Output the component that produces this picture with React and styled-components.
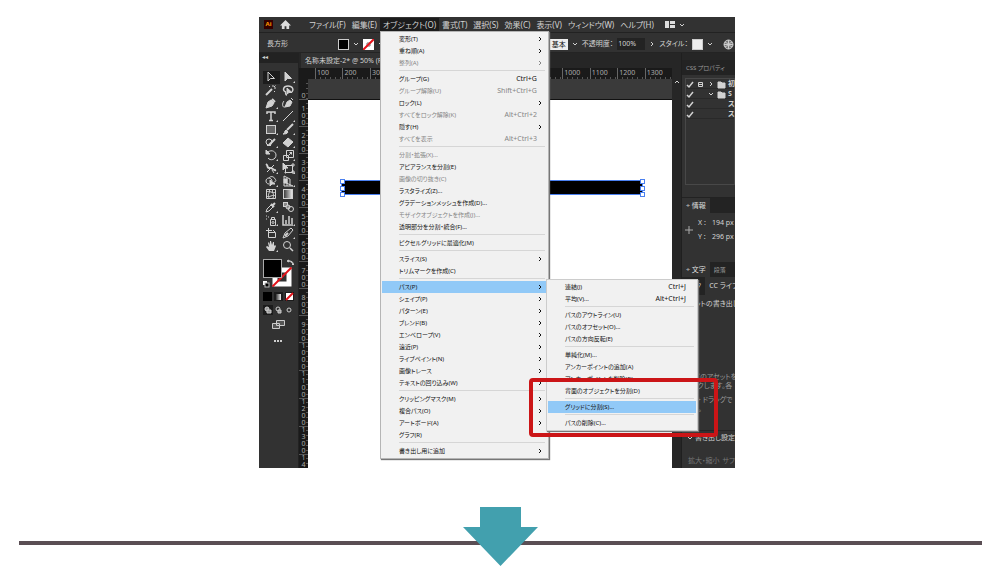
import React from 'react'
import styled, { createGlobalStyle } from 'styled-components'

const menuTabs = ['ファイル(F)', '編集(E)', 'オブジェクト(O)', '書式(T)', '選択(S)', '効果(C)', '表示(V)', 'ウィンドウ(W)', 'ヘルプ(H)']

const pathItems = [
    [{ text: '連結(J)', keys: 'Ctrl+J' }, { text: '平均(V)...', keys: 'Alt+Ctrl+J' }],
    [{ text: 'パスのアウトライン(U)' }, { text: 'パスのオフセット(O)...' }, { text: 'パスの方向反転(E)' }],
    [{ text: '単純化(M)...' }, { text: 'アンカーポイントの追加(A)' }, { text: 'アンカーポイントを削除(R)' }, { text: '背面のオブジェクトを分割(D)' }],
    [{ text: 'グリッドに分割(S)...', active: true }],
    [{ text: 'パスの削除(C)...' }],
]

const objectItems = [
    [{ text: '変形(T)', more: true }, { text: '重ね順(A)', more: true }, { text: '整列(A)', more: true, off: true }],
    [
        { text: 'グループ(G)', keys: 'Ctrl+G' },
        { text: 'グループ解除(U)', keys: 'Shift+Ctrl+G', off: true },
        { text: 'ロック(L)', more: true },
        { text: 'すべてをロック解除(K)', keys: 'Alt+Ctrl+2', off: true },
        { text: '隠す(H)', more: true },
        { text: 'すべてを表示', keys: 'Alt+Ctrl+3', off: true },
    ],
    [
        { text: '分割・拡張(X)...', off: true },
        { text: 'アピアランスを分割(E)' },
        { text: '画像の切り抜き(C)', off: true },
        { text: 'ラスタライズ(Z)...' },
        { text: 'グラデーションメッシュを作成(D)...' },
        { text: 'モザイクオブジェクトを作成(J)...', off: true },
        { text: '透明部分を分割・統合(F)...' },
    ],
    [{ text: 'ピクセルグリッドに最適化(M)' }],
    [{ text: 'スライス(S)', more: true }, { text: 'トリムマークを作成(C)' }],
    [
        { text: 'パス(P)', more: true, active: true, sub: pathItems },
        { text: 'シェイプ(P)', more: true },
        { text: 'パターン(E)', more: true },
        { text: 'ブレンド(B)', more: true },
        { text: 'エンベロープ(V)', more: true },
        { text: '遠近(P)', more: true },
        { text: 'ライブペイント(N)', more: true },
        { text: '画像トレース', more: true },
        { text: 'テキストの回り込み(W)', more: true },
    ],
    [
        { text: 'クリッピングマスク(M)', more: true },
        { text: '複合パス(O)', more: true },
        { text: 'アートボード(A)', more: true },
        { text: 'グラフ(R)' },
    ],
    [{ text: '書き出し用に追加', more: true }],
]

// every tool is drawn on a 12 x 12 grid
const tools = [
    ['選択', <path d="M3 1v9l2.500-2.500H9.500z" />],
    ['ダイレクト選択', <path d="M3 1v9l2.500-2.500H9.500z" fill="currentColor" />],
    ['自動選択', <><path d="M1 11 7 5" strokeWidth="2" /><path d="M8 1v2M11 4H9M4 2l1 1M10 8 9 7M10.500 1.500 9 3" /></>],
    ['なげなわ', <><path d="M4 8C0 7 1 2 6 2s6 4 4 6M4 8c-1 1 0 3 1 3" strokeWidth="1.500" /><path d="M5 4v6l2-1.500h3z" fill="currentColor" /></>],
    ['ペン', <><path d="M1 11 3 5l3-2 3 3-2 3z" fill="currentColor" /><path d="m7 2 3 3" strokeWidth="2" /></>],
    ['曲線', <><path d="m3 10 2-5 3-2 2 2-2 4z" fill="currentColor" /><path d="M3 10C0 11 0 6 2 4M9 1l2 2" /></>],
    ['文字', <path d="M2 4V2h8v2M6 2v9M4 10.500h4" strokeWidth="1.500" />],
    ['直線', <path d="M1 11 11 1" />],
    ['長方形', <rect x="1.500" y="2.500" width="9" height="8" fill="#666" />],
    ['ブラシ', <><path d="m5 7 6-6" strokeWidth="2" /><path d="M1 11c2 0 1-3 3-4l2 2c-1 2-3 2-5 2z" fill="currentColor" /></>],
    ['Shaper', <><circle cx="4" cy="6" r="3" /><path d="m4 9 6-6" strokeWidth="2" /><path d="M2 9.500h4" /></>],
    ['消しゴム', <path d="m1 7 5-5 5 4-5 5z" fill="currentColor" />],
    ['回転', <><path d="M3 3c4-3 8 0 8 3 0 5-6 6-8 3" /><path d="M1 1v4h4z" fill="currentColor" /></>],
    ['拡大・縮小', <path d="M4.500 1.500h7v7h-7zM1.500 6.500h5v5h-5zM7 6l3-3M7.500 3.500h2v2" />],
    ['線幅', <><path d="M1 2c3 2 0 4 4 4s3 3 6 2" strokeWidth="2" /><path d="M2 10 9 3M7 8l2 3" /></>],
    ['自由変形', <><path d="M3.500 3.500h7v7h-7zM10 2h2v2h-2zM10 9h2v2h-2zM3 10h1v1h-1z" /><path d="M1 1v7l2-2h3z" fill="currentColor" /></>],
    ['シェイプ形成', <><path d="M4 9C0 9 0 3 4 3c1-2 5-2 6 1 2 2 0 3-1 3M4 3c2 0 3 2 3 3" /><path d="M5 5v6l2-2h3z" fill="currentColor" /></>],
    ['遠近グリッド', <><path d="M2 1v10h9L2 7M5 3v8M2 1l6 3v7" /><path d="M2 4h3v4H2z" fill="currentColor" /></>],
    ['メッシュ', <path d="M1.500 1.500h9v9h-9zM4 1c2 3-2 5 0 9M8 1c-2 3 2 5 0 9M1 4c4-2 6 2 10 0M1 8c4 2 6-2 10 0" />],
    ['グラデーション', <><defs><linearGradient id="toolFade"><stop stopColor="#333" /><stop offset="1" stopColor="#eee" /></linearGradient></defs><rect x="1.500" y="1.500" width="9" height="9" fill="url(#toolFade)" /></>],
    ['スポイト', <><path d="m1 11 1-3 4-4 2 2-4 4z" /><path d="m6 3 3 3M8 4l2-2" strokeWidth="2" /></>],
    ['ブレンド', <><rect x="1.500" y="1.500" width="4" height="4" fill="#888" /><circle cx="6" cy="6" r="2" fill="#888" /><circle cx="9" cy="8" r="2.500" /></>],
    ['シンボル', <><path d="M5.500 5.500h5v6h-5zM6.500 3.500h3v2h-3z" /><path d="M1 2h1M1 5h1M3 3h1" /><circle cx="8" cy="8.500" r="1" /></>],
    ['グラフ', <path d="M1 1v10h10M4 10V6M7 10V2M10 10V4" strokeWidth="1.500" />],
    ['アートボード', <path d="M3.500 1v9M1 3.500h6M3.500 5.500h7v5h-7zM8 3l2 2" />],
    ['スライス', <><path d="m1 11 2-5 6-5 2 2-5 6z" /><path d="m3 9 3-3" strokeWidth="2" /></>],
    ['手のひら', <><path d="M4 11 1 7l1-1 2 1-1-4 1-1 1 3V1h1l1 4 1-3h1v4l1-1 1 1-2 5z" fill="currentColor" stroke="none" /></>],
    ['ズーム', <><circle cx="5" cy="5" r="3.500" /><path d="m8 8 3 3" strokeWidth="1.500" /></>],
]
const noCorner = ['選択', '自動選択', '曲線', 'メッシュ', 'グラデーション', 'ブレンド', 'アートボード', 'ズーム', 'なげなわ']

// the marks behind the open menu carry no number
const topMarks = ['100', '200', '300', '', '', '', '', '', '', '1000', '1100', '1200', '1300']
const sideMarks = ['100', '200', '300', '400', '500', '600', '700', '800', '900', '1000', '1100', '1200', '1300', '14']

const Chevron = ({ turn = 'right' }) => (
    <ChevronIcon viewBox="0 0 6 6" $turn={turn}><path d="m2 1 2 2-2 2" /></ChevronIcon>
)

const MenuList = ({ groups }) => groups.map((group, i) => (
    <MenuGroup key={i} role="group">
        {group.map(item => (
            <MenuRow key={item.text}>
                <MenuButton type="button" disabled={item.off} $active={item.active}>
                    <span>{item.text}</span>
                    {item.keys && <Keys>{item.keys}</Keys>}
                    {item.more && <Chevron />}
                </MenuButton>
                {item.sub && <SubMenu><MenuList groups={item.sub} /></SubMenu>}
            </MenuRow>
        ))}
    </MenuGroup>
))

const Toolbox = () => (
    <ToolPanel>
        <PanelGrip>◂◂</PanelGrip>
        <ToolGrid>
            {tools.map(([name, shape], i) => (
                <ToolButton key={name} type="button" aria-label={name} $active={i === 0}>
                    <ToolIcon viewBox="0 0 13 13">
                        {shape}
                        {!noCorner.includes(name) && <path d="M13 10v2h-2z" fill="currentColor" stroke="none" />}
                    </ToolIcon>
                </ToolButton>
            ))}
        </ToolGrid>
        <Swatches viewBox="0 0 34 88">
            <rect x="13" y="12" width="14" height="14" fill="none" stroke="#fff" strokeWidth="5" />
            <path d="M10.500 28.500 29.500 9.500" stroke="#e3131b" strokeWidth="2" />
            <rect x="1.500" y="1.500" width="18" height="18" fill="#000" stroke="#aaa" />
            <path d="M27 3c3 0 4 1 4 3M25 3l2-1v2zM30 6h2l-1 1z" stroke="#ccc" fill="#ccc" />
            <rect x="1" y="23" width="4" height="4" fill="#fff" />
            <rect x="3" y="25" width="4" height="4" fill="#000" stroke="#bbb" />
            <rect x="1" y="34" width="9" height="9" fill="#000" />
            <rect x="12" y="34" width="9" height="9" fill="#1c1c1c" />
            <rect x="14" y="36" width="5" height="6" fill="url(#toolFade)" />
            <rect x="23" y="34" width="9" height="9" fill="#1c1c1c" />
            <rect x="24" y="35" width="7" height="7" fill="#fff" />
            <path d="m24 42 7-7" stroke="#e3131b" strokeWidth="2" />
            <rect x="1" y="47" width="10" height="10" fill="#1b1b1b" />
            <g fill="#999" stroke="#ccc">
                <circle cx="5" cy="51" r="2" /><path d="M5 52h4v3H5z" />
                <circle cx="16" cy="51" r="2" fill="none" /><path d="M16 52h3v3h-3z" />
                <circle cx="27" cy="52" r="2" fill="none" />
            </g>
            <path d="M14.500 62.500h8v5h-8zM10.500 65.500h7v5h-7z" fill="#555" stroke="#ccc" />
            <path d="M12 83h2M15 83h2M18 83h2" stroke="#ccc" strokeWidth="2" />
        </Swatches>
    </ToolPanel>
)

const Artwork = () => (
    <Canvas>
        <Artboard>
            <Shape>
                <Handle $x="0" $y="0" /><Handle $x="100%" $y="0" />
                <Handle $x="0" $y="50%" /><Handle $x="100%" $y="50%" />
                <Handle $x="0" $y="100%" /><Handle $x="100%" $y="100%" />
            </Shape>
        </Artboard>
    </Canvas>
)

const Check = () => <Glyph viewBox="0 0 9 9"><path d="m1 5 2 2 4-5" strokeWidth="1.500" /></Glyph>
const Folder = () => <Glyph viewBox="0 0 9 9"><path d="M1 2h3l1 1h3v5H1z" fill="currentColor" /></Glyph>

const SidePanels = () => (
    <Side>
        <PanelTabs><PanelTab type="button" $quiet>CSS プロパティ</PanelTab></PanelTabs>
        <LayerPanel>
            <LayerList>
                <Layer><Check /><Glyph viewBox="0 0 9 9"><path d="M2.500 2.500h4v4h-4zM3 4.500h3" /></Glyph><Chevron /><Folder /><b>初</b></Layer>
                <Layer><Check /><i /><Chevron turn="down" /><Folder /><b>S</b></Layer>
                <Layer><Check /><i /><i /><i /><b>ス</b></Layer>
                <Layer><Check /><i /><i /><i /><b>ス</b></Layer>
            </LayerList>
        </LayerPanel>
        <PanelTabs><PanelTab type="button" $on>÷ 情報</PanelTab></PanelTabs>
        <InfoPanel>
            <Plus viewBox="0 0 8 8"><path d="M4 0v8M0 4h8" /></Plus>
            <Coords>
                <dt>X :</dt><dd>194 px</dd>
                <dt>Y :</dt><dd>296 px</dd>
            </Coords>
        </InfoPanel>
        <PanelTabs><PanelTab type="button" $on>÷ 文字</PanelTab><PanelTab type="button" $quiet>段落</PanelTab></PanelTabs>
        <PanelTabs $tall><PanelTab type="button" $inset>ク</PanelTab><PanelTab type="button" $on>CC ライブ</PanelTab></PanelTabs>
        <ExportPanel>
            <ExportTitle>アセットの書き出し</ExportTitle>
            <Hint>任意のアセットを<br />ラックします。各</Hint>
            <Hint>Alt + ドラッグで<br />ます。</Hint>
            <ExportSettings><Chevron turn="down" />書き出し設定</ExportSettings>
            <ExportScale><span>拡大・縮小</span><span>サフ</span></ExportScale>
        </ExportPanel>
    </Side>
)

const App = () => (
    <Page>
        <GlobalStyle />
        <Figure>
            <Window>
                <MenuBar>
                    <Logo>Ai</Logo>
                    <Home viewBox="0 0 12 12"><path d="M6 1 0 7h2v4h3V8h2v3h3V7h2z" /></Home>
                    {menuTabs.map(text => (
                        <TabHolder key={text}>
                            <MenuTab type="button" $open={text.startsWith('オブ')}>{text}</MenuTab>
                            {text.startsWith('オブ') && (
                                <Menu><MenuList groups={objectItems} /></Menu>
                            )}
                        </TabHolder>
                    ))}
                    <LayoutSwitch type="button" aria-label="ワークスペース">
                        <LayoutIcon viewBox="0 0 10 7"><path d="M0 0h4v7H0zM5 0h5v3H5zM5 4h5v3H5z" /></LayoutIcon>
                        <Chevron turn="down" />
                    </LayoutSwitch>
                </MenuBar>
                <ControlBar>
                    <ControlName>長方形</ControlName>
                    <ControlSet>
                        <Swatch $fill="#000" /><Chevron turn="down" />
                        <NoStroke viewBox="0 0 11 11"><path d="M0 0h11v11H0z" fill="#fff" /><path d="M4 4h3v3H4z" fill="none" stroke="#777" /><path d="M0 11 11 0" stroke="#e3131b" strokeWidth="2" /></NoStroke>
                        <Chevron turn="down" />
                    </ControlSet>
                    <ControlSet $end>
                        <Basic>基本</Basic><Chevron turn="down" />
                        <label htmlFor="opacity">不透明度：</label>
                        <Opacity id="opacity" defaultValue="100%" />
                        <Chevron />
                        <span>スタイル：</span>
                        <Swatch $fill="#eee" /><Chevron turn="down" />
                        <Globe viewBox="0 0 11 11"><circle cx="5.500" cy="5.500" r="4.500" /><path d="M1 5.500h9M5.500 1v9M2 3c3 2 4 2 7 0M2 8c3-2 4-2 7 0" /></Globe>
                    </ControlSet>
                </ControlBar>
                <Workspace>
                    <Toolbox />
                    <Document>
                        <FileTabs><FileTab type="button">名称未設定-2* @ 50% (RGB</FileTab></FileTabs>
                        <TopRuler>{topMarks.map((n, i) => <TopMark key={i}>{n}</TopMark>)}</TopRuler>
                        <DocumentBody>
                            <SideRuler>
                                <SideStart>0</SideStart>
                                {sideMarks.map(n => (
                                    <SideMark key={n}>{n.split('').map((d, i) => <span key={i}>{d}</span>)}</SideMark>
                                ))}
                            </SideRuler>
                            <Artwork />
                            <ScrollTrack><Chevron turn="up" /></ScrollTrack>
                        </DocumentBody>
                    </Document>
                    <SidePanels />
                </Workspace>
                <Highlight />
            </Window>
        </Figure>
        <Divider>
            <Arrow viewBox="0 0 75 59"><path d="M17 0h41v20h17L37.500 59 0 20h17z" /></Arrow>
        </Divider>
    </Page>
)

export default App
//-------------STYLES-------------------------------------------

const GlobalStyle = createGlobalStyle`
    * {
        box-sizing: border-box;
    }

    body {
        margin: 0;
        background: #fff;
        font-family: "Noto Sans", "Noto Sans CJK JP", sans-serif;
    }

    button, input {
        font: inherit;
        color: inherit;
        border: none;
        padding: 0;
        margin: 0;
        background: transparent;
        white-space: nowrap;
    }
`

const Page = styled.main`
    padding: 17px 18px 0 19px;
`

const Figure = styled.div`
    padding-right: 7px;
`

const Window = styled.section`
    position: relative;
    display: flex;
    flex-direction: column;
    width: 100%;
    max-width: 476px;
    margin: 0 auto;
    overflow: hidden;
    background: #323232;
    color: #d2d2d2;
    font-size: 7px;
    line-height: 12px;
    font-feature-settings: "palt";
`

const ChevronIcon = styled.svg`
    width: 6px;
    height: 6px;
    flex: none;
    fill: none;
    stroke: currentColor;
    transform: rotate(${props => ({ right: 0, down: 90, up: -90 })[props.$turn]}deg);
`

//---- menu bar

const MenuBar = styled.nav`
    display: flex;
    align-items: center;
    height: 15px;
    padding-left: 5px;
`

const Logo = styled.span`
    width: 9px;
    height: 9px;
    line-height: 9px;
    font-size: 6px;
    font-weight: bold;
    text-align: center;
    color: #ff9a00;
    background: #330000;
`

const Home = styled.svg`
    width: 11px;
    height: 11px;
    margin: 0 15px 0 7px;
    fill: #ddd;
`

const TabHolder = styled.div`
    position: relative;
`

const MenuTab = styled.button`
    height: 14px;
    padding: 0 3px;
    font-size: 8px;
    background: ${props => props.$open ? '#1c1c1c' : 'transparent'};
`

const LayoutSwitch = styled.button`
    display: flex;
    align-items: center;
    gap: 4px;
    margin-left: 8px;
`

const LayoutIcon = styled.svg`
    width: 10px;
    height: 7px;
    fill: #ddd;
`

//---- drop-down menus

const Menu = styled.div`
    position: absolute;
    top: calc(100% - 1px);
    left: 0;
    z-index: 2;
    width: 169px;
    padding: 1px;
    border: 1px solid #b5b5b5;
    background: #f1f1f1;
    color: #111;
    font-size: 6px;
    box-shadow: 1px 1px 1px #777;
`

const SubMenu = styled(Menu)`
    top: -2px;
    left: calc(100% - 1px);
    width: 152px;
    border-color: #ccc;
`

const MenuGroup = styled.div`
    & + &::before {
        content: '';
        display: block;
        height: 1px;
        margin: 1px 2px 2px 17px;
        background: #d6d6d6;
    }
`

const MenuRow = styled.div`
    position: relative;
`

const MenuButton = styled.button`
    display: flex;
    align-items: center;
    justify-content: space-between;
    width: 100%;
    height: 12px;
    padding: 0 4px 0 17px;
    line-height: 12px;
    text-align: left;
    background: ${props => props.$active ? '#91c9f7' : 'transparent'};

    &:disabled {
        color: #858585;
    }
`

const Keys = styled.span`
    margin-right: 6px;
    font-size: 7px;
`

//---- control bar

const ControlBar = styled.div`
    display: flex;
    align-items: center;
    height: 21px;
    padding: 3px 1px 0 8px;
    border-top: 1px solid #222;
    border-bottom: 1px solid #242424;
`

const ControlName = styled.span`
    width: 71px;
`

const ControlSet = styled.div`
    display: flex;
    align-items: center;
    gap: 4px;
    margin-left: ${props => props.$end ? 'auto' : 0};
`

const Swatch = styled.span`
    width: 11px;
    height: 11px;
    border: 1px solid #ccc;
    background: ${props => props.$fill};
`

const NoStroke = styled.svg`
    width: 11px;
    height: 11px;
`

const Basic = styled.span`
    padding: 0 2px;
    line-height: 11px;
    background: #eee;
    color: #111;
`

const Opacity = styled.input`
    width: 28px;
    height: 12px;
    padding: 0 1px;
    background: #232323;
`

const Globe = styled.svg`
    width: 11px;
    height: 11px;
    margin-left: 6px;
    fill: #777;
    stroke: #ccc;
`

//---- workspace

const Workspace = styled.div`
    display: grid;
    grid-template-columns: 40px minmax(0, 1fr) 54px;
`

const ToolPanel = styled.aside`
    background: #323232;
    border-right: 1px solid #222;
`

const PanelGrip = styled.div`
    height: 18px;
    padding: 0 3px;
    line-height: 9px;
    font-size: 6px;
    background: linear-gradient(#222 10px, #323232 10px);
`

const ToolGrid = styled.div`
    display: grid;
    grid-template-columns: 17px 17px;
    grid-auto-rows: 13px;
    padding-left: 4px;
`

const ToolButton = styled.button`
    display: flex;
    align-items: center;
    justify-content: center;
    background: ${props => props.$active ? '#1c1c1c' : 'transparent'};
`

const ToolIcon = styled.svg`
    width: 13px;
    height: 13px;
    fill: none;
    stroke: currentColor;
`

const Swatches = styled.svg`
    display: block;
    width: 34px;
    height: 88px;
    margin: 5px 0 0 3px;
`

const Document = styled.div`
    display: flex;
    flex-direction: column;
    background: #262626;
`

const FileTabs = styled.div`
    display: flex;
    height: 15px;
    padding-left: 2px;
`

const FileTab = styled.button`
    padding: 0 4px;
    background: #323232;
`

const TopRuler = styled.div`
    display: flex;
    height: 11px;
    padding-left: 16px;
    margin-right: 9px;
    overflow: hidden;
    background: #1a1a1a;
`

const TopMark = styled.span`
    flex: 1 0 27px;
    padding-left: 1px;
    border-left: 1px solid #666;
    line-height: 9px;
    color: #aaa;
    background: repeating-linear-gradient(90deg, transparent 0 4px, #555 4px 5px) bottom / 100% 2px no-repeat;
`

const DocumentBody = styled.div`
    flex: 1;
    display: grid;
    grid-template-columns: 9px minmax(0, 1fr) 9px;
`

const SideRuler = styled.div`
    background: #1a1a1a;
    color: #aaa;
    line-height: 7px;
`

const SideMark = styled.div`
    display: flex;
    flex-direction: column;
    align-items: center;
    justify-content: flex-end;
    min-height: 27px;
    box-shadow: inset 0 1px #555;
    background: repeating-linear-gradient(transparent 0 4px, #555 4px 5px) right / 2px 100% no-repeat;

    &:last-child {
        min-height: 14px;
    }
`

const SideStart = styled(SideMark)`
    min-height: 20px;
    box-shadow: none;
`

const Canvas = styled.div`
    padding-top: 20px;
    background: #3a3a3a;
`

const Artboard = styled.div`
    height: 100%;
    padding: 80px 29px 0 33px;
    background: #fff;
    border-top: 1px solid #111;
`

const Shape = styled.div`
    position: relative;
    height: 15px;
    border: 1px solid #4a80f0;
    background: #000;
`

const Handle = styled.i`
    position: absolute;
    left: ${props => props.$x};
    top: ${props => props.$y};
    width: 5px;
    height: 5px;
    margin: -2px;
    border: 1px solid #4a80f0;
    background: #fff;
`

const ScrollTrack = styled.div`
    display: flex;
    flex-direction: column;
    align-items: center;
    background: #262626;
`

//---- right-hand panels

const Side = styled.aside`
    display: flex;
    flex-direction: column;
    min-width: 0;
    overflow: hidden;
    padding-top: 7px;
    border-left: 1px solid #1f1f1f;
    background: linear-gradient(#262626 7px, #323232 7px);
`

const PanelTabs = styled.div`
    display: flex;
    flex: none;
    height: ${props => props.$tall ? 18 : 15}px;
    background: #232323;
`

const PanelTab = styled.button`
    padding: 0 4px 0 ${props => props.$inset ? 13 : 4}px;
    font-size: ${props => props.$quiet ? 6 : 7}px;
    color: ${props => props.$quiet ? '#999' : '#ddd'};
    background: ${props => props.$on ? '#323232' : 'transparent'};
`

const LayerPanel = styled.div`
    flex: none;
    height: 123px;
    padding: 3px 0 0 3px;
    border-bottom: 1px solid #222;
`

const LayerList = styled.ul`
    height: 107px;
    margin: 0;
    padding: 0;
    list-style: none;
    border: 1px solid #484848;
`

const Layer = styled.li`
    display: grid;
    grid-template-columns: 9px 11px 8px 10px 11px;
    align-items: center;
    height: 10px;
    line-height: 10px;
    gap: 1px;
    border-bottom: 1px solid #292929;
`

const Glyph = styled.svg`
    width: 9px;
    height: 9px;
    fill: none;
    stroke: currentColor;
`

const InfoPanel = styled.div`
    display: flex;
    flex: none;
    align-items: center;
    gap: 5px;
    height: 49px;
    padding: 0 3px 16px;
`

const Plus = styled.svg`
    width: 8px;
    height: 8px;
    flex: none;
    stroke: #aaa;
`

const Coords = styled.dl`
    display: grid;
    grid-template-columns: 11px auto;
    gap: 2px 3px;
    margin: 0;
    white-space: nowrap;

    dd {
        margin: 0;
    }
`

const ExportPanel = styled.div`
    flex: 1;
    white-space: nowrap;
`

const ExportTitle = styled.h2`
    height: 77px;
    margin: 0;
    font-size: 7px;
    font-weight: normal;
    line-height: 17px;
`

const Hint = styled.p`
    margin: 0 0 5px 4px;
    line-height: 9px;
    color: #999;
`

const ExportSettings = styled.h3`
    display: flex;
    align-items: center;
    gap: 2px;
    margin: 17px 0 0;
    padding-left: 5px;
    border-top: 1px solid #262626;
    font-size: 7px;
    font-weight: normal;
    line-height: 14px;
`

const ExportScale = styled.div`
    display: flex;
    gap: 3px;
    padding: 10px 0 0 6px;
    color: #777;
`

const Highlight = styled.div`
    position: absolute;
    top: 361px;
    left: 270px;
    z-index: 3;
    width: 189px;
    height: 59px;
    border: 4px solid #cb1517;
    border-radius: 4px;
`

//---- divider under the window

const Divider = styled.div`
    display: flex;
    justify-content: center;
    margin-top: 39px;
    background: linear-gradient(#5a4e54, #5a4e54) 0 34px / 100% 4px no-repeat;
`

const Arrow = styled.svg`
    width: 75px;
    height: 59px;
    fill: #42a0ae;
`
